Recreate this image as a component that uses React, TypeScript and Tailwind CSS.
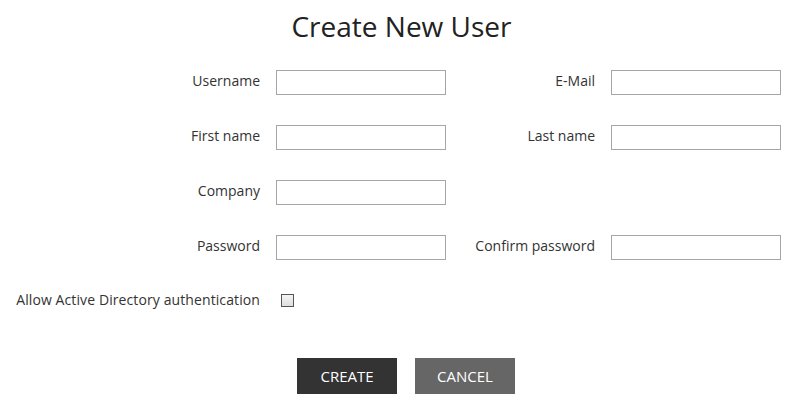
import React from 'react';

const font = { fontFamily: '"Open Sans", "Liberation Sans", sans-serif' };

function Field({ label, type = 'text' }: { label: string; type?: string }) {
  return (
    <>
      <label className="text-right text-[14px] leading-[21px] text-[#333]">{label}</label>
      <input type={type} className="h-[25px] w-[170px] border border-[#a6a6a6] bg-white outline-none" />
    </>
  );
}

export default function App() {
  return (
    <div className="w-[803px] h-[406px] bg-white" style={font}>
      <h1 className="pt-[6px] text-center text-[28px] leading-[40px] text-[#222]">Create New User</h1>

      <div className="mt-[24px] grid grid-cols-[260px_170px_133px_170px] gap-x-4 gap-y-[30px] items-start">
        <Field label="Username" />
        <Field label="E-Mail" />
        <Field label="First name" />
        <Field label="Last name" />
        <Field label="Company" />
        <div />
        <div />
        <Field label="Password" type="password" />
        <Field label="Confirm password" type="password" />
      </div>

      <div className="mt-[29px] grid grid-cols-[260px_auto] gap-x-4 items-center">
        <span className="text-right text-[14px] leading-[22px] text-[#333] tracking-[0.1px]">Allow Active Directory authentication</span>
        <span className="ml-[5px] inline-block w-[13px] h-[13px] border border-[#555] bg-gradient-to-b from-[#f4f4f4] to-[#dedede]" />
      </div>

      <div className="mt-[47px] flex justify-center gap-[18px] pl-[9px]">
        <button className="w-[100px] h-[36px] bg-[#333] text-white text-[15px]">CREATE</button>
        <button className="w-[100px] h-[36px] bg-[#666] text-white text-[15px]">CANCEL</button>
      </div>
    </div>
  );
}
